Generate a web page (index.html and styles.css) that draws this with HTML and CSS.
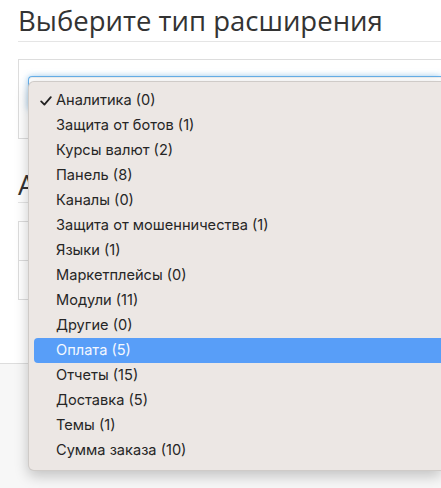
FILE: index.html
```html
<!DOCTYPE html>
<html>
  <head>
    <meta charset="utf-8">
    <link rel="stylesheet" href="styles.css">
  </head>
  <body>
    <div class="page">
      <h2 class="title">Выберите тип расширения</h2>
      <div class="panel">
        <div class="select-box"></div>
      </div>
      <h2 class="title title-second">Активные</h2>
      <div class="ext-table">
        <div class="ext-row"></div>
        <div class="ext-row"></div>
      </div>
    </div>
    <div class="footer"></div>

    <ul class="dropdown">
      <li class="item checked">
        <svg class="check" width="12" height="10" viewBox="0 0 12 10"><path d="M1.2 5.4 L4.4 8.6 L10.8 1.2" fill="none" stroke="#222" stroke-width="1.8" stroke-linecap="round" stroke-linejoin="round"/></svg>
        Аналитика (0)
      </li>
      <li class="item">Защита от ботов (1)</li>
      <li class="item">Курсы валют (2)</li>
      <li class="item">Панель (8)</li>
      <li class="item">Каналы (0)</li>
      <li class="item">Защита от мошенничества (1)</li>
      <li class="item">Языки (1)</li>
      <li class="item">Маркетплейсы (0)</li>
      <li class="item">Модули (11)</li>
      <li class="item">Другие (0)</li>
      <li class="item active">Оплата (5)</li>
      <li class="item">Отчеты (15)</li>
      <li class="item">Доставка (5)</li>
      <li class="item">Темы (1)</li>
      <li class="item">Сумма заказа (10)</li>
    </ul>
  </body>
</html>
```

FILE: styles.css
```css
body {
  margin: 0;
  background: #fff;
  font-family: "Open Sans", "Liberation Sans", sans-serif;
  overflow: hidden;
  height: 488px;
  position: relative;
}

.page {
  padding-left: 18px;
}

.title {
  margin: 0;
  padding: 6px 0 5px 0;
  font-size: 27.5px;
  font-weight: normal;
  line-height: 30px;
  color: #333;
  border-bottom: 1px solid #e5e5e5;
}

.title-second {
  margin-top: 25px;
  padding-bottom: 2px;
}

.panel {
  margin-top: 17px;
  height: 62px;
  padding: 16px 0 0 9px;
  border: 1px solid #ddd;
  border-right: none;
  background: #fff;
}

.select-box {
  height: 32px;
  border: 1px solid #66afe9;
  border-right: none;
  border-radius: 4px 0 0 4px;
  box-shadow: inset 0 1px 1px rgba(0, 0, 0, .075), 0 0 6px rgba(102, 175, 233, .6);
  background: #fff;
}

.ext-table {
  margin-top: 18px;
  border: 1px solid #ddd;
  border-right: none;
}

.ext-row {
  height: 38px;
}

.ext-row + .ext-row {
  border-top: 1px solid #ddd;
}

.footer {
  margin-top: 63px;
  height: 140px;
  border-top: 1px solid #ddd;
  background: #f7f7f7;
}

/* native menu of the open select */
.dropdown {
  position: absolute;
  left: 28px;
  right: 0;
  top: 81px;
  height: 375px;
  margin: 0;
  padding: 6px 0 7px 0;
  list-style: none;
  background: #ece7e4;
  border: 1px solid rgba(0, 0, 0, .12);
  border-right: none;
  border-radius: 6px 0 0 6px;
  box-shadow: 0 5px 14px rgba(0, 0, 0, .22);
  font-family: "Inter", "Liberation Sans", sans-serif;
  font-size: 14.6px;
  color: #262626;
}

.item {
  position: relative;
  height: 25px;
  line-height: 25px;
  margin: 0 0 0 5px;
  padding-left: 22px;
}

.item.active {
  background: #589ef8;
  color: #f4f8ff;
  border-radius: 4px 0 0 4px;
}

.check {
  position: absolute;
  left: 6px;
  top: 8px;
}
```
